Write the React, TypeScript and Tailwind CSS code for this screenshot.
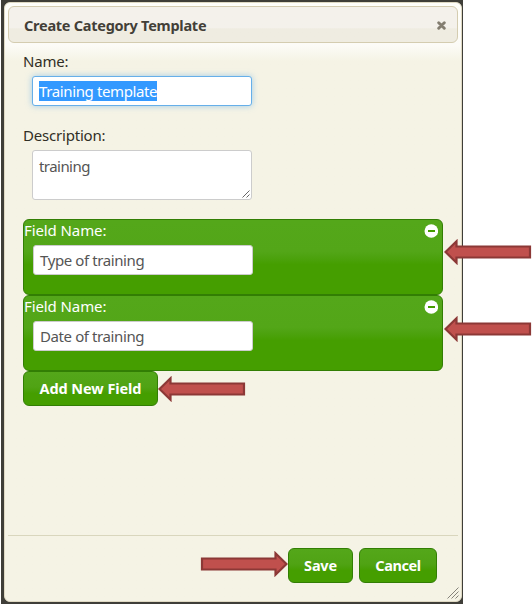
import type { ReactNode } from "react";

function Arrow({ className }: { className: string }) {
  return (
    <svg viewBox="0 0 88 26" className={`absolute h-[26px] w-[88px] ${className}`}>
      <path d="M1.5 13 L12.5 2.3 V7.5 H86 V18.5 H12.5 V23.7 Z" fill="#c0504d" stroke="#8c3836" strokeWidth="2.2" />
    </svg>
  );
}

function Button({ children, className }: { children: ReactNode; className: string }) {
  return (
    <button
      className={`flex h-[35px] items-center justify-center rounded-[6px] border border-[#327e04] bg-linear-to-b from-[#54a71a] from-0% via-[#50a314] via-45% to-[#459e00] to-65% text-[14.5px] font-bold whitespace-nowrap text-white ${className}`}
    >
      {children}
    </button>
  );
}

function FieldPanel({ value }: { value: string }) {
  return (
    <div className="h-[76px] w-[420px] rounded-[6px] border border-[#327e04] bg-linear-to-b from-[#54a71a] from-0% via-[#53a618] via-42% to-[#459e00] to-60%">
      <div className="flex h-[25px] items-start justify-between pr-[4px]">
        <span className="text-[15px] leading-5 tracking-[-0.1px] whitespace-nowrap text-white">Field Name:</span>
        <svg viewBox="0 0 14 14" className="mt-[4px] h-[14px] w-[14px]">
          <circle cx="7.3" cy="7" r="6.8" fill="#fff" />
          <rect x="4" y="6" width="7" height="2" fill="#459e00" />
        </svg>
      </div>
      <div className="ml-[9px] flex h-[30px] w-[220px] items-center rounded-[3px] border border-[#cccccc] bg-white pl-[6px]">
        <span className="text-[15px] leading-5 tracking-[-0.4px] whitespace-nowrap text-[#555555]">{value}</span>
      </div>
    </div>
  );
}

export default function App() {
  return (
    <div className="relative h-[605px] w-[532px] overflow-hidden bg-white pl-px font-['Noto_Sans','Open_Sans',sans-serif]">
      <div className="h-[604px] w-[462px] bg-[#3f3e38] pt-[2px] pl-[3px]">
        <div className="flex h-[600px] w-[458px] flex-col rounded-[6px] border border-[#dfd9c3] bg-[#f5f3e5] bg-linear-to-b from-[#fffffa] from-0% via-[#fcfbf7] via-[42px] to-[#f5f3e5] to-[58px] px-[3px] pt-[3px]">
          <header className="flex h-[37px] w-[450px] shrink-0 items-center justify-between rounded-[6px] border border-[#d4ccb0] bg-linear-to-b from-[#f4f1eb] from-60% to-[#efece1] to-62% pr-[11px] pl-[15px]">
            <h1 className="text-[14.5px] leading-5 font-bold tracking-[-0.26px] whitespace-nowrap text-[#433f38]">Create Category Template</h1>
            <svg viewBox="0 0 9 9" className="mt-px h-[9px] w-[9px]">
              <path d="M1.7 1.7 L7.3 7.3 M7.3 1.7 L1.7 7.3" stroke="#847e71" strokeWidth="2.9" strokeLinecap="round" />
            </svg>
          </header>
          <main className="h-[493px] shrink-0 border-b border-[#d9d6bd] pt-[8px] pl-[15px] text-[15px] text-[#312e25]">
            <label className="block h-[25px] leading-[21px] tracking-[-0.2px]">Name:</label>
            <div className="ml-[9px] flex h-[30px] w-[220px] items-center rounded-[3px] border border-[#66afe9] bg-white pl-[6px] shadow-[0_0_6px_rgba(102,175,233,0.6)]">
              <span className="h-5 w-[118px] bg-[#3399ff] leading-5 tracking-[-0.38px] whitespace-nowrap text-white">Training template</span>
            </div>
            <label className="mt-[19px] block h-[25px] leading-[21px] tracking-[-0.2px]">Description:</label>
            <div className="relative ml-[9px] h-[50px] w-[220px] rounded-[3px] border border-[#cccccc] bg-white pt-[5px] pl-[6px] leading-5 tracking-[-0.55px] text-[#555555]">
              training
              <svg viewBox="0 0 8 8" className="absolute right-px bottom-px h-2 w-2" stroke="#666" strokeWidth="1">
                <path d="M0.5 7.5 L7.5 0.5 M4.5 7.5 L7.5 4.5" />
              </svg>
            </div>
            <section className="mt-[19px]">
              <FieldPanel value="Type of training" />
              <FieldPanel value="Date of training" />
              <Button className="w-[135px] tracking-[-0.08px]">Add New Field</Button>
            </section>
          </main>
          <footer className="flex gap-[6px] pt-[12px] pl-[280px]">
            <Button className="w-[65px] tracking-[-0.2px]">Save</Button>
            <Button className="w-[78px] tracking-[-0.4px]">Cancel</Button>
          </footer>
        </div>
      </div>
      <svg viewBox="0 0 12 12" className="absolute top-[587px] left-[447px] h-3 w-3" stroke="#85827a" strokeWidth="1">
        <path d="M0.5 11.5 L11.5 0.5 M4.5 11.5 L11.5 4.5 M8.5 11.5 L11.5 8.5" />
      </svg>
      <Arrow className="top-[239px] left-[444px]" />
      <Arrow className="top-[316px] left-[444px]" />
      <Arrow className="top-[376px] left-[158px]" />
      <Arrow className="top-[551px] left-[200px] rotate-180" />
    </div>
  );
}
